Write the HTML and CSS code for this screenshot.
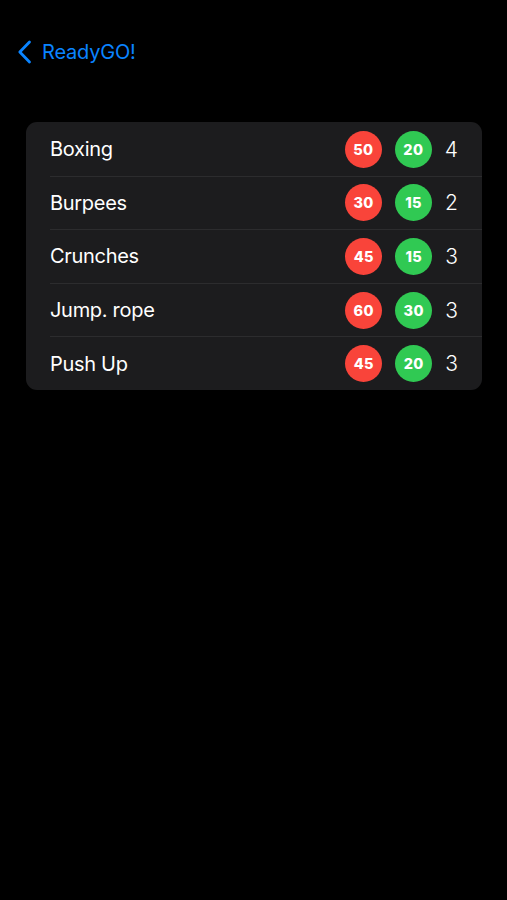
FILE: index.html
```html
<!DOCTYPE html>
<html lang="en">
<head>
  <meta charset="UTF-8">
  <meta name="viewport" content="width=device-width, initial-scale=1.0">
  <title>ReadyGO!</title>
  <link rel="stylesheet" href="styles.css">
</head>
<body>
  <div class="screen">
    <nav class="navbar">
      <a class="back" href="#">
        <svg class="chevron" width="15" height="24" viewBox="0 0 15 24">
          <path d="M12.5 2 L2.8 12 L12.5 22" fill="none" stroke="currentColor" stroke-width="2.8" stroke-linecap="round" stroke-linejoin="round"/>
        </svg>
        <span>ReadyGO!</span>
      </a>
    </nav>

    <ul class="list">
      <li class="row">
        <span class="name">Boxing</span>
        <span class="badge red">50</span>
        <span class="badge green">20</span>
        <span class="count">4</span>
      </li>
      <li class="row">
        <span class="name">Burpees</span>
        <span class="badge red">30</span>
        <span class="badge green">15</span>
        <span class="count">2</span>
      </li>
      <li class="row">
        <span class="name">Crunches</span>
        <span class="badge red">45</span>
        <span class="badge green">15</span>
        <span class="count">3</span>
      </li>
      <li class="row">
        <span class="name">Jump. rope</span>
        <span class="badge red">60</span>
        <span class="badge green">30</span>
        <span class="count">3</span>
      </li>
      <li class="row">
        <span class="name">Push Up</span>
        <span class="badge red">45</span>
        <span class="badge green">20</span>
        <span class="count">3</span>
      </li>
    </ul>
  </div>
</body>
</html>
```

FILE: styles.css
```css
:root {
  --bg: #000000;
  --card: #1c1c1e;
  --sep: #2c2c2e;
  --blue: #0a84ff;
  --red: #f9443a;
  --green: #30c953;
  --text: #ffffff;
  --font: Inter, "Liberation Sans", sans-serif;
}
* { box-sizing: border-box; margin: 0; padding: 0; }
html, body {
  background: var(--bg);
  height: 100%;
}
body {
  font-family: var(--font);
  color: var(--text);
}
.screen {
  width: 507px;
  height: 900px;
  padding: 0 25px 0 26px;
}
.navbar {
  height: 122px;
  padding-top: 40px;
}
.back {
  display: inline-flex;
  align-items: center;
  gap: 10px;
  margin-left: -9px;
  color: var(--blue);
  text-decoration: none;
  font-size: 20px;
  letter-spacing: -0.2px;
}
.chevron { display: block; }
.list {
  list-style: none;
  background: var(--card);
  border-radius: 11px;
  overflow: hidden;
}
.row {
  display: flex;
  align-items: center;
  gap: 13px;
  height: 53.6px;
  padding: 1px 24px 0 24px;
  position: relative;
}
.row + .row::before {
  content: "";
  position: absolute;
  top: 0;
  left: 24px;
  right: 0;
  height: 1px;
  background: var(--sep);
}
.name {
  flex: 1;
  font-size: 20px;
  letter-spacing: -0.3px;
}
.badge {
  width: 37px;
  height: 37px;
  border-radius: 50%;
  display: flex;
  align-items: center;
  justify-content: center;
  font-size: 14.5px;
  font-weight: 800;
  letter-spacing: 0.4px;
}
.badge.red { background: var(--red); }
.badge.green { background: var(--green); }
.count {
  font-size: 21px;
  font-weight: 300;
  min-width: 11px;
  text-align: right;
}
```
